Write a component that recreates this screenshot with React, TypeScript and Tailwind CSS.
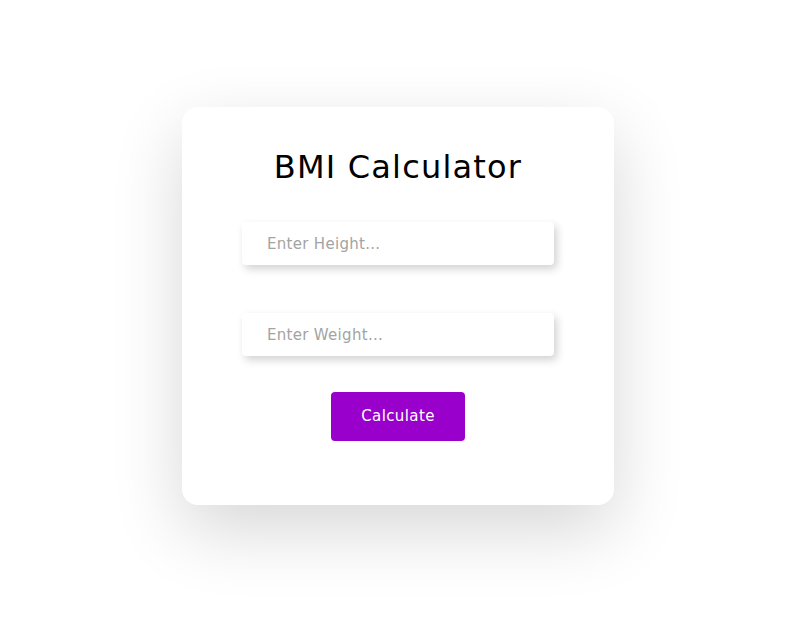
export default function App() {
  return (
    <div className="min-h-screen w-full bg-white flex justify-center pt-[107px] pl-[8px]" style={{ fontFamily: '"DejaVu Sans", sans-serif' }}>
      <div className="w-[432px] h-[398px] bg-white rounded-[16px] shadow-[0_25px_70px_rgba(0,0,0,0.16)] flex flex-col items-center pt-[40px]">
        <h1 className="text-[32px] leading-[40px] text-black font-normal tracking-[1.2px]">BMI Calculator</h1>
        <input
          className="mt-[35px] w-[312px] h-[43px] rounded-[4px] bg-white pl-[25px] text-[15px] tracking-[0.3px] text-gray-700 placeholder:text-[#a3a3a3] outline-none shadow-[3px_4px_8px_rgba(0,0,0,0.18)]"
          placeholder="Enter Height..."
        />
        <input
          className="mt-[48px] w-[312px] h-[43px] rounded-[4px] bg-white pl-[25px] text-[15px] tracking-[0.3px] text-gray-700 placeholder:text-[#a3a3a3] outline-none shadow-[3px_4px_8px_rgba(0,0,0,0.18)]"
          placeholder="Enter Weight..."
        />
        <button className="mt-[36px] w-[134px] h-[49px] rounded-[4px] bg-[#9900cc] text-white text-[15px] tracking-[0.4px]">
          Calculate
        </button>
      </div>
    </div>
  );
}
